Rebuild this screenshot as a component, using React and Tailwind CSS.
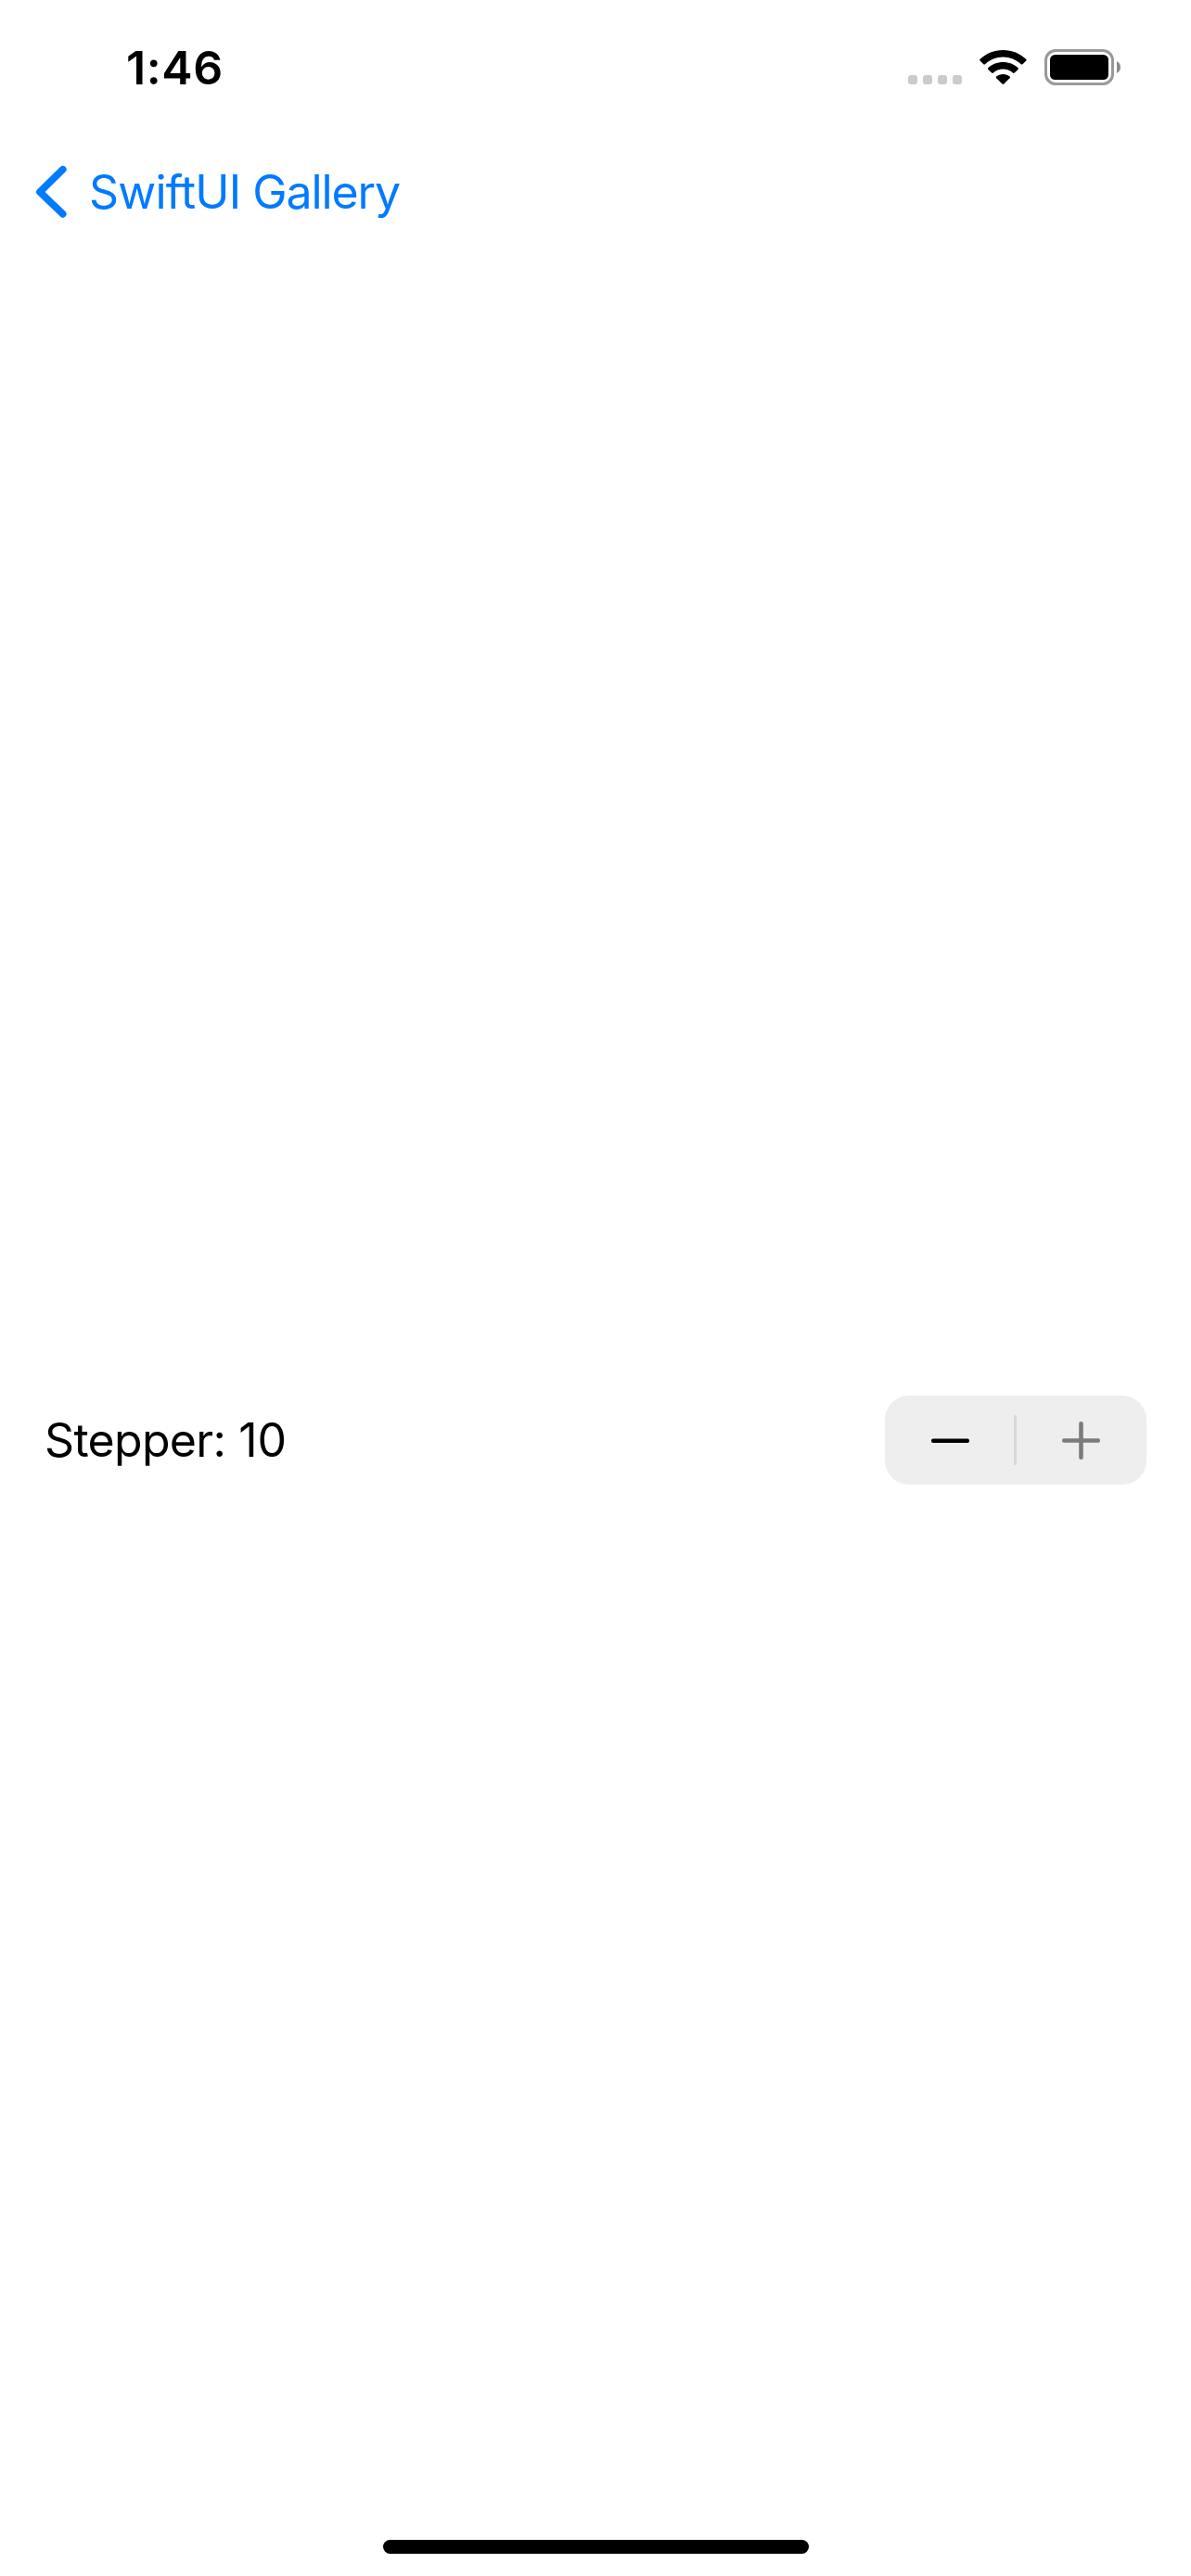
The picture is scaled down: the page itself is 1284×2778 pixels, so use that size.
import React, { useState } from "react";

function StatusBar() {
  return (
    <header className="flex h-[141px] shrink-0 items-start justify-between pl-[136px] pr-[76px]">
      <span className="mt-[43px] text-[50px] font-semibold leading-[60px] tracking-[0.6px] text-black">1:46</span>
      <div className="flex h-[39px] mt-[53px]">
        <div className="mt-7 flex gap-1.5">
          <span className="size-2.5 rounded-[3px] bg-[#cbcbcb]" />
          <span className="size-2.5 rounded-[3px] bg-[#cbcbcb]" />
          <span className="size-2.5 rounded-[3px] bg-[#cbcbcb]" />
          <span className="size-2.5 rounded-[3px] bg-[#cbcbcb]" />
        </div>
        <svg className="ml-[19px] mt-px" width="51" height="37" viewBox="0 0 51 37">
          <path d="M25.4 0C35 0 43.8 3.7 50.2 9.8Q51 10.6 50.2 11.5L46.5 15.2Q45.6 16 44.7 15.2C39.7 10.5 32.9 7.6 25.4 7.6C17.9 7.6 11.1 10.5 6.1 15.2Q5.2 16 4.3 15.2L.6 11.5Q-.2 10.6 .6 9.8C7 3.7 15.8 0 25.4 0Z" />
          <path d="M25.4 13C31.6 13 37.2 15.3 41.4 19.1Q42.3 20 41.4 20.9L37.7 24.5Q36.8 25.3 35.9 24.5C33.1 22.1 29.4 20.6 25.4 20.6C21.4 20.6 17.7 22.1 14.9 24.5Q14 25.3 13.1 24.5L9.4 20.9Q8.5 20 9.4 19.1C13.6 15.3 19.2 13 25.4 13Z" />
          <path d="M25.4 25.9C28.2 25.9 30.7 26.9 32.6 28.5Q33.5 29.3 32.6 30.2L26.3 36.4Q25.4 37.2 24.5 36.4L18.2 30.2Q17.3 29.3 18.2 28.5C20.1 26.9 22.6 25.9 25.4 25.9Z" />
        </svg>
        <svg className="ml-[19px]" width="82" height="39" viewBox="0 0 82 39">
          <rect x="1.5" y="1.5" width="72" height="36" rx="10.5" fill="none" stroke="#999" strokeWidth="3" />
          <rect x="6" y="6" width="63" height="27" rx="5.5" />
          <path d="M78 13Q82 15.2 82 19.5T78 26Z" fill="#8c8c8c" />
        </svg>
      </div>
    </header>
  );
}

function NavigationBar() {
  return (
    <nav className="flex h-[132px] shrink-0 items-center pl-[38px] text-[#007aff]">
      <button className="flex items-center">
        <svg width="35" height="58" viewBox="0 0 35 58" fill="none">
          <path d="M29.7 4.8L5 29L29.7 52.8" stroke="currentColor" strokeWidth="7.8" strokeLinecap="round" strokeLinejoin="round" />
        </svg>
        <span className="ml-[23px] text-[50px] leading-[60px] tracking-[-1.1px]">
          <span className="tracking-[-0.8px]">SwiftUI</span> Gallery
        </span>
      </button>
    </nav>
  );
}

function Stepper({ value, max, onChange }) {
  const atMax = value >= max;
  return (
    <div className="flex h-24 w-[282px] items-center rounded-[26px] bg-[#eeeeee]">
      <button aria-label="Decrement" className="flex h-full w-[139px] items-center pl-[50px]" onClick={() => onChange(value - 1)}>
        <svg width="41" height="41" viewBox="0 0 41 41">
          <rect y="18.5" width="41" height="4.5" rx="2" />
        </svg>
      </button>
      <span className="h-[54px] w-[3px] rounded-full bg-[#d8d8d8]" />
      <button aria-label="Increment" className="flex h-full w-[140px] items-center pl-[49px]" disabled={atMax} onClick={() => onChange(value + 1)}>
        <svg width="41" height="41" viewBox="0 0 41 41" fill={atMax ? "#7b7b7b" : "#000"}>
          <path d="M18.2 2Q18.2 0 20.5 0T22.8 2V18.2H39Q41 18.2 41 20.5T39 22.8H22.8V39Q22.8 41 20.5 41T18.2 39V22.8H2Q0 22.8 0 20.5T2 18.2H18.2Z" />
        </svg>
      </button>
    </div>
  );
}

export default function App() {
  const [value, setValue] = useState(10);
  return (
    <div className="flex h-[2778px] w-[1284px] flex-col bg-white font-['Inter',sans-serif] text-black">
      <StatusBar />
      <NavigationBar />
      <main className="flex flex-1 items-center justify-between px-12 pt-[94px]">
        <span className="text-[50px] leading-[60px]">
          <span className="tracking-[-0.7px]">Stepper:</span> {value}
        </span>
        <Stepper value={value} max={10} onChange={setValue} />
      </main>
      <footer className="flex h-[39px] shrink-0 justify-center">
        <span className="h-[15px] w-[459px] rounded-full bg-black" />
      </footer>
    </div>
  );
}
